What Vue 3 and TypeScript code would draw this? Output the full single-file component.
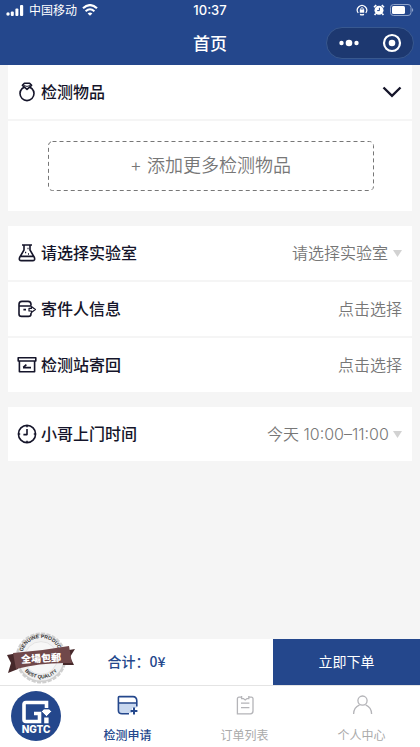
<script setup lang="ts">
import { ref } from 'vue'

type TabKey = 'apply' | 'orders' | 'me'

const tabs: { key: TabKey; label: string }[] = [
  { key: 'apply', label: '检测申请' },
  { key: 'orders', label: '订单列表' },
  { key: 'me', label: '个人中心' },
]
const activeTab = ref<TabKey>('apply')
const expanded = ref(true)
const total = ref(0)

const labs: string[] = ['请选择实验室']
const slots: string[] = ['今天 10:00–11:00']
const lab = ref(labs[0])
const slot = ref(slots[0])
</script>

<template>
  <div class="page">
    <header class="header">
      <div class="status">
        <div class="status-left">
          <svg class="signal" viewBox="0 0 18 11" fill="#fff">
            <circle cx="2" cy="9" r="1.7" />
            <rect x="4.8" y="6.6" width="3" height="4.4" rx="1" />
            <rect x="9.4" y="3.6" width="3" height="7.4" rx="1" />
            <rect x="14" y="0" width="3.2" height="11" rx="1" />
          </svg>
          <span class="carrier">中国移动</span>
          <svg class="wifi" viewBox="0 0 16 12" fill="none" stroke="#fff">
            <path d="M1 4.2Q8-2 15 4.2" stroke-width="2.2" />
            <path d="M3.6 7.2Q8 3.3 12.4 7.2" stroke-width="2" />
            <path d="M8 11.8L5.6 9.4Q8 7.4 10.4 9.4Z" fill="#fff" stroke="none" />
          </svg>
        </div>
        <time class="clock">10:37</time>
        <div class="status-right">
          <svg class="lock" viewBox="0 0 12 12" fill="none" stroke="#fff">
            <path d="M2.2 9A4.7 4.7 0 1 1 9.8 9M4 10.4Q6 11.4 8 10.4" stroke-width="1.2" />
            <path d="M4.7 5.8V4.6Q6 2.4 7.3 4.6V5.8" />
            <rect x="3.8" y="5.5" width="4.4" height="3.2" fill="#fff" stroke="none" />
          </svg>
          <svg class="alarm" viewBox="0 0 12 12">
            <circle cx="6" cy="6.3" r="4.5" fill="#fff" />
            <path d="M1 3.2L3.2 1M11 3.2L8.8 1M2.8 9.6L1.6 11M9.2 9.6L10.4 11" stroke="#fff" stroke-width="1.6" />
            <path d="M6.4 3.8V6.6H4.2" fill="none" stroke="#24478c" />
          </svg>
          <svg class="battery" viewBox="0 0 24 12">
            <rect x=".5" y=".5" width="20.5" height="11" rx="3" fill="none" stroke="#8fa3c8" />
            <rect x="2" y="2" width="13" height="8" rx="1.5" fill="#fff" />
            <path d="M22 4Q24.5 6 22 8Z" fill="#8fa3c8" />
          </svg>
        </div>
      </div>
      <div class="titlebar">
        <h1 class="title">首页</h1>
        <div class="capsule">
          <button class="capsule-btn" type="button" aria-label="更多">
            <svg viewBox="0 0 22 22" fill="#fff">
              <circle cx="3.5" cy="11" r="2.2" />
              <circle cx="11" cy="11" r="3.3" />
              <circle cx="18.5" cy="11" r="2.2" />
            </svg>
          </button>
          <button class="capsule-btn" type="button" aria-label="关闭">
            <svg viewBox="0 0 22 22">
              <circle cx="11" cy="11" r="8" fill="none" stroke="#fff" stroke-width="2.2" />
              <circle cx="11" cy="11" r="3.3" fill="#fff" />
            </svg>
          </button>
        </div>
      </div>
    </header>

    <main class="content">
      <section class="card">
        <div class="row">
          <svg class="icon" viewBox="0 0 20 20">
            <circle cx="10" cy="11.6" r="7" />
            <path d="M5.4 3.4L7.4 1.2H12.6L14.6 3.4L10 7.4Z" fill="#fff" />
            <path d="M7 3.6L10 4.4L13 3.6" stroke-width="1" />
          </svg>
          <h2 class="label">检测物品</h2>
          <button class="toggle" type="button" aria-label="展开" :aria-expanded="expanded" @click="expanded = !expanded">
            <svg viewBox="0 0 20 12"><path d="M1.5 1.5L10 9.8L18.5 1.5" /></svg>
          </button>
        </div>
        <div v-if="expanded" class="items">
          <button class="add" type="button">
            <svg class="dash" aria-hidden="true"><rect x="1.5" y=".5" rx="4" /></svg>
            <span>+ 添加更多检测物品</span>
          </button>
        </div>
      </section>

      <section class="card">
        <div class="row">
          <svg class="icon" viewBox="0 0 20 20">
            <path d="M5 2H15M7 2.4V7L2.6 14.5Q1.6 17.6 4.4 17.6H15.6Q18.4 17.6 17.4 14.5L13 7V2.4M3.6 13.4H16.4" />
            <path d="M10.5 5.5H11.5M8 9.5H9.2M11 11H12" />
          </svg>
          <label class="label" for="lab">请选择实验室</label>
          <select id="lab" v-model="lab" class="value picker">
            <option v-for="item in labs" :key="item">{{ item }}</option>
          </select>
          <svg class="caret" viewBox="0 0 9 7"><path d="M0 0H9L4.5 7Z" /></svg>
        </div>
        <div class="row">
          <svg class="icon" viewBox="0 0 20 20">
            <path d="M14 6.8V5.5Q14 2.4 11 2.4H5Q2 2.4 2 5.5V15Q2 17.4 4.5 17.4H11.5Q14 17.4 14 15V14M2 7H14M6.4 10.6H9" />
            <path d="M14.4 7.6L18.4 10.6L14.4 13.6V12H12V9.4H14.4Z" stroke-width="1.2" />
          </svg>
          <span id="sender" class="label">寄件人信息</span>
          <button class="value" type="button" aria-describedby="sender">点击选择</button>
        </div>
        <div class="row">
          <svg class="icon" viewBox="0 0 20 20">
            <path d="M1.2 2.8H18.8V6H1.2ZM2.4 6V16.8H17.6V6" />
            <path d="M14 12.6H6M6.2 12.4L9.4 9.6" />
          </svg>
          <span id="back" class="label">检测站寄回</span>
          <button class="value" type="button" aria-describedby="back">点击选择</button>
        </div>
      </section>

      <section class="card">
        <div class="row">
          <svg class="icon" viewBox="0 0 20 20">
            <circle cx="10" cy="10" r="8.6" />
            <path d="M10 5V10.6H6.4M10 1.4V3.2M10 16.8V18.6M1.4 10H3.2M16.8 10H18.6" />
          </svg>
          <label class="label" for="slot">小哥上门时间</label>
          <select id="slot" v-model="slot" class="value picker">
            <option v-for="item in slots" :key="item">{{ item }}</option>
          </select>
          <svg class="caret" viewBox="0 0 9 7"><path d="M0 0H9L4.5 7Z" /></svg>
        </div>
      </section>
    </main>

    <footer class="footer">
      <div class="checkout">
        <svg class="seal" viewBox="0 0 70 54" role="img" aria-label="全場包邮">
          <defs>
            <path id="arc-top" d="M16 26A19 19 0 0 1 54 26" />
            <path id="arc-bottom" d="M13.5 26A21.5 21.5 0 0 0 56.5 26" />
          </defs>
          <circle cx="35" cy="27" r="24.2" fill="#cfcfcf" stroke="#cfcfcf" stroke-width="2.6" stroke-dasharray="4 1.4" />
          <circle cx="35" cy="27" r="22.6" fill="#f1f1f1" />
          <circle cx="35" cy="27" r="16.4" fill="#f7f7f7" stroke="#e4e4e4" />
          <text class="seal-ring"><textPath href="#arc-top" startOffset="50%">GENUINE PRODUCT</textPath></text>
          <text class="seal-ring"><textPath href="#arc-bottom" startOffset="50%">BEST QUALITY</textPath></text>
          <path d="M1 24L12 22V38L2 42L5 32ZM69 18L57 20V34L68 34L64 26Z" fill="#46282a" />
          <path d="M7 22Q35 20 63 15L66 32Q36 31 10 38Z" fill="#70484a" />
          <text class="seal-text" x="35" y="31" transform="rotate(-3 35 27)">全場包郵</text>
        </svg>
        <p class="total">合计：{{ total }}¥</p>
        <button class="submit" type="button">立即下单</button>
      </div>
      <nav class="tabs">
        <a class="brand" href="#home" aria-label="NGTC">
          <svg viewBox="0 0 50 50">
            <circle cx="25" cy="25" r="25" fill="#24478c" />
            <path d="M35.5 17V11.5H15Q13 11.5 13 13.5V28.5Q13 30.5 15 30.5H28.5V22.5H23" fill="none" stroke="#fff" stroke-width="3.6" />
            <path d="M30.5 20.5L32.8 18H38.2L40.5 20.5L35.5 25.5Z" fill="#fff" stroke="#24478c" stroke-width=".7" />
            <rect x="33.2" y="26.5" width="4.4" height="5.8" fill="#fff" />
            <text class="brand-text" x="25" y="42">NGTC</text>
          </svg>
        </a>
        <a
          v-for="tab in tabs"
          :key="tab.key"
          class="tab"
          :class="{ active: activeTab === tab.key }"
          :href="'#' + tab.key"
          @click.prevent="activeTab = tab.key"
        >
          <svg v-if="tab.key === 'apply'" class="tab-icon" viewBox="0 0 22 22">
            <path d="M1.5 8H19.5V13H15V18H5Q1.5 18 1.5 15Z" fill="#c9d8ef" stroke="none" />
            <path d="M19.8 11.5V6Q19.8 1.6 16 1.6H2.2Q1.4 1.6 1.4 2.6V15.5Q1.4 18.8 5 18.8H12M1.4 8H19.8" />
            <path d="M17 12.6V19.4M13.6 16H20.4" stroke-width="2" />
          </svg>
          <svg v-else-if="tab.key === 'orders'" class="tab-icon" viewBox="0 0 22 22">
            <path d="M7.5 2.2H5Q3.4 2.2 3.4 3.8V18.8H16.4Q19 18.8 19 16V3.8Q19 2.2 17.4 2.2H15M7.6 1V3.6H9.4L11.2 5L13 3.6H14.8V1" />
            <path d="M7 8.2H15.4M7 12.6H15.4" />
          </svg>
          <svg v-else class="tab-icon" viewBox="0 0 22 22">
            <circle cx="11.5" cy="5.6" r="4.6" />
            <path d="M2.6 19Q2.6 12.4 8.6 9.8M14.6 9.8Q20.6 12.4 20.6 19" />
          </svg>
          <span>{{ tab.label }}</span>
        </a>
      </nav>
    </footer>
  </div>
</template>

<style>
body {
  margin: 0;
  background: #f5f5f5;
}
</style>

<style scoped>
.page {
  display: flex;
  flex-direction: column;
  min-height: 100vh;
  background: #f5f5f5;
  color: #15152a;
  font-family: "Noto Sans CJK SC", sans-serif;
}

button,
select {
  margin: 0;
  padding: 0;
  border: 0;
  background: none;
  color: inherit;
  font-family: inherit;
}

svg {
  display: block;
}

.header {
  background: #24478c;
  color: #fff;
}

.status {
  display: grid;
  grid-template-columns: 1fr auto 1fr;
  align-items: center;
  height: 20px;
  padding: 0 6px;
}

.status-left,
.status-right {
  display: flex;
  align-items: center;
  gap: 5px;
}

.status-right {
  justify-content: flex-end;
}

.signal {
  width: 18px;
  height: 11px;
}

.carrier {
  font-size: 12px;
  line-height: 20px;
}

.wifi {
  width: 16px;
  height: 12px;
}

.clock {
  font: 500 13px/20px Inter, sans-serif;
}

.lock,
.alarm {
  width: 12px;
  height: 12px;
}

.battery {
  width: 24px;
  height: 12px;
}

.titlebar {
  display: grid;
  grid-template-columns: 1fr auto 1fr;
  align-items: center;
  height: 45px;
  padding: 0 6px;
}

.title {
  grid-column: 2;
  margin: 0;
  font-size: 17px;
  font-weight: 500;
  line-height: 24px;
}

.capsule {
  display: flex;
  justify-self: end;
  box-sizing: border-box;
  width: 88px;
  height: 32px;
  border: 1px solid #38588f;
  border-radius: 16px;
  background: #1d3870;
}

.capsule-btn {
  display: flex;
  flex: 1;
  align-items: center;
  justify-content: center;
}

.capsule-btn svg {
  width: 22px;
  height: 22px;
}

.content {
  display: flex;
  flex: 1;
  flex-direction: column;
  gap: 15px;
  padding: 0 8px 16px;
}

.card {
  display: flex;
  flex-direction: column;
  gap: 2px;
}

.row {
  display: flex;
  align-items: center;
  height: 54px;
  padding: 0 10px 0 9px;
  background: #fff;
}

.icon {
  flex: none;
  width: 20px;
  height: 20px;
  margin-right: 4px;
  fill: none;
  stroke: #15152a;
  stroke-width: 1.6;
  stroke-linejoin: round;
}

.label {
  flex: 1;
  margin: 0;
  padding-bottom: 2px;
  font-size: 16px;
  font-weight: 500;
  line-height: 24px;
}

.value {
  padding-bottom: 2px;
  color: #777;
  font-size: 16px;
  font-weight: 350;
  line-height: 24px;
}

.picker {
  padding-bottom: 0;
  appearance: none;
  font-family: Inter, "Noto Sans CJK SC", sans-serif;
}

.caret {
  width: 9px;
  height: 7px;
  margin-left: 4px;
  fill: #d2d2d2;
}

.toggle svg {
  width: 20px;
  height: 12px;
  fill: none;
  stroke: #15152a;
  stroke-width: 2.4;
}

.items {
  padding: 20px 38px 20px 39px;
  background: #fff;
}

.add {
  position: relative;
  display: block;
  width: 100%;
  height: 50px;
  color: #777;
  font-family: Inter, "Noto Sans CJK SC", sans-serif;
  font-size: 18px;
  font-weight: 350;
  line-height: 26px;
}

.dash {
  position: absolute;
  inset: 0;
  width: 100%;
  height: 100%;
}

.dash rect {
  width: calc(100% - 2px);
  height: calc(100% - 1px);
  fill: none;
  stroke: #777;
  stroke-dasharray: 4 3;
}

.footer {
  background: #fff;
}

.checkout {
  position: relative;
  display: flex;
  align-items: stretch;
  height: 46px;
  border-bottom: 1px solid #e4e4e4;
}

.seal {
  position: absolute;
  bottom: 0;
  left: 6px;
  width: 70px;
  height: 54px;
}

.seal-ring {
  fill: #333;
  font: 700 5px "Liberation Sans", sans-serif;
  text-anchor: middle;
}

.seal-text {
  fill: #fff;
  font-size: 10px;
  font-weight: 900;
  text-anchor: middle;
}

.total {
  flex: 1;
  margin: 0;
  text-align: center;
  color: #24478c;
  font-size: 14px;
  font-weight: 500;
  line-height: 44px;
}

.submit {
  width: 35%;
  padding-bottom: 2px;
  background: #24478c;
  color: #fff;
  font-size: 14px;
}

.tabs {
  display: flex;
  height: 61px;
}

.brand {
  display: flex;
  box-sizing: border-box;
  width: 69px;
  padding: 5px 0 0 11px;
}

.brand svg {
  width: 50px;
  height: 50px;
}

.brand-text {
  fill: #fff;
  font: 800 10px Inter, sans-serif;
  text-anchor: middle;
}

.tab {
  display: flex;
  flex: 1;
  flex-direction: column;
  align-items: center;
  gap: 8px;
  padding-top: 9px;
  color: #aaa;
  font-size: 12px;
  line-height: 20px;
  text-decoration: none;
}

.tab-icon {
  width: 22px;
  height: 22px;
  fill: none;
  stroke: #b4b4b8;
  stroke-width: 1.3;
}

.tab.active {
  color: #24478c;
  font-weight: 500;
}

.tab.active .tab-icon {
  stroke: #24478c;
  stroke-width: 1.6;
}
</style>
